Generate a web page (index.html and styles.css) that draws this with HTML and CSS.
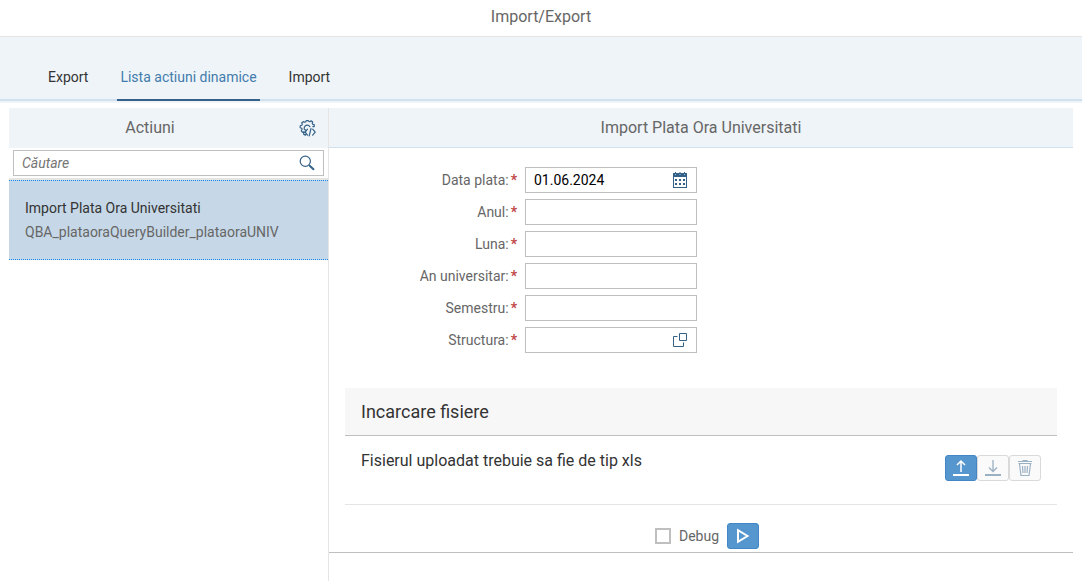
FILE: index.html
```html
<!DOCTYPE html>
<html lang="ro">
<head>
<meta charset="utf-8">
<meta name="viewport" content="width=device-width, initial-scale=1">
<title>Import/Export</title>
<link rel="stylesheet" href="styles.css">
</head>
<body>
<header class="page-header"><h1 class="page-title">Import/Export</h1></header>
<nav class="tabs">
  <a class="tab" href="#export">Export</a>
  <a class="tab tab-active" href="#lista" aria-current="page">Lista actiuni dinamice</a>
  <a class="tab" href="#import">Import</a>
</nav>
<div class="split">
  <aside class="master">
    <div class="bar bar-master">
      <h2 class="bar-title">Actiuni</h2>
      <button class="icon-button" type="button" aria-label="Setari dezvoltator">
        <svg width="17" height="17" viewBox="0 0 17 17" fill="none" stroke="#346187" stroke-width="1.2" stroke-linecap="round" stroke-linejoin="round">
          <path d="M13.8 6.6h1.4V4.7l-1.4-.4-.6-1 .5-1.3-1.5-1.2-1.3.9-1-.3L9.3.7H7.2l-.6 1.2-1.1.3L4.2 1.6 2.7 3l.6 1.3-.5 1-1.6.5v2l1.5.5.4 1.1-.8 1.4 1.200 1.500 1.500-.5.6.5"/>
          <path d="M4.600 12.200l.2 2.200 1.600.7.700-.9"/>
          <path d="M5.200 8.700c-.2-2 1.300-3.500 3.100-3.500 1.200 0 2.100.6 2.600 1.500M5.400 9.300l1.300 1"/>
          <path d="M8.500 9.200L6.200 12.200l2.300 3M13.700 9.200l2.500 3-2.500 3M12 8.500l-1.800 7.400"/>
        </svg>
      </button>
    </div>
    <div class="search-row">
      <div class="field">
        <input class="input search-input" type="text" placeholder="Căutare" aria-label="Căutare">
        <button class="icon-button field-icon" type="button" aria-label="Cauta">
          <svg width="16" height="16" viewBox="0 0 16 16" fill="none" stroke="#346187"><circle cx="6.300" cy="6.300" r="5.100" stroke-width="1.200"/><path d="M10 10l1.500 1.500" stroke-width="1.300"/><path d="M11.200 11.200l3.300 3" stroke-width="2" stroke-linecap="round"/></svg>
        </button>
      </div>
    </div>
    <ul class="list">
      <li><a class="list-item" href="#plata"><span class="item-title">Import Plata Ora Universitati</span><span class="item-text">QBA_plataoraQueryBuilder_plataoraUNIV</span></a></li>
    </ul>
  </aside>
  <main class="detail">
    <div class="bar bar-detail"><h2 class="bar-title">Import Plata Ora Universitati</h2></div>
    <form class="form">
      <div class="form-row">
        <label class="label" for="data">Data plata:<span class="required">*</span></label>
        <div class="field">
          <input class="input" id="data" type="text" value="01.06.2024" required>
          <button class="icon-button field-icon" type="button" aria-label="Alege data">
            <svg width="16" height="16" viewBox="0 0 16 16" fill="#346187"><path fill-rule="evenodd" d="M1 1h14v15H1zM2 5v10h12V5z"/><path d="M3 0h1v1H3zM7.500 0h1v1h-1zM12 0h1v1h-1zM3 7h2v2H3zM7 7h2v2H7zM11 7h2v2h-2zM3 11h2v2H3zM7 11h2v2H7zM11 11h2v2h-2z"/><path fill="#a9bfd2" d="M3 2h1v1H3zM7.500 2h1v1h-1zM12 2h1v1h-1z"/></svg>
          </button>
        </div>
      </div>
      <div class="form-row"><label class="label" for="anul">Anul:<span class="required">*</span></label><div class="field"><input class="input" id="anul" type="text" required></div></div>
      <div class="form-row"><label class="label" for="luna">Luna:<span class="required">*</span></label><div class="field"><input class="input" id="luna" type="text" required></div></div>
      <div class="form-row"><label class="label" for="an-univ">An universitar:<span class="required">*</span></label><div class="field"><input class="input" id="an-univ" type="text" required></div></div>
      <div class="form-row"><label class="label" for="semestru">Semestru:<span class="required">*</span></label><div class="field"><input class="input" id="semestru" type="text" required></div></div>
      <div class="form-row">
        <label class="label" for="structura">Structura:<span class="required">*</span></label>
        <div class="field">
          <input class="input" id="structura" type="text" required>
          <button class="icon-button field-icon" type="button" aria-label="Alege structura">
            <svg width="16" height="16" viewBox="0 0 16 16" fill="none" stroke="#346187" stroke-width="1"><path d="M7.500 1.500h7v7h-7zM5.500 4.500h-4v10h10v-4"/></svg>
          </button>
        </div>
      </div>
    </form>
    <section class="upload">
      <h3 class="upload-title">Incarcare fisiere</h3>
      <div class="upload-body">
        <p class="upload-text">Fisierul uploadat trebuie sa fie de tip xls</p>
        <div class="upload-actions">
          <button class="button button-primary" type="button" aria-label="Incarca">
            <svg width="18" height="18" viewBox="0 0 18 18" fill="none" stroke="currentColor"><path d="M1 16h16" stroke-width="2"/><path d="M9 13V2M5 6l4-4 4 4" stroke-width="1.500"/></svg>
          </button>
          <button class="button" type="button" aria-label="Descarca" disabled>
            <svg width="18" height="18" viewBox="0 0 18 18" fill="none" stroke="currentColor"><path d="M1 16h16" stroke-width="2"/><path d="M9 1v11M5 8.500l4 4 4-4" stroke-width="1.300"/></svg>
          </button>
          <button class="button" type="button" aria-label="Sterge" disabled>
            <svg width="18" height="18" viewBox="0 0 18 18" fill="none" stroke="currentColor" stroke-width="1.200"><path d="M2 2.500h14M6.500 1.500h5M2.500 4.500h13M3.500 5l1.500 11.500h8L14.500 5M6.500 7l.5 7M9 7v7M11.500 7l-.5 7"/></svg>
          </button>
        </div>
      </div>
    </section>
    <div class="footer">
      <label class="check"><input class="checkbox" type="checkbox">Debug</label>
      <button class="button button-primary" type="button" aria-label="Executa">
        <svg width="16" height="16" viewBox="0 0 16 16" fill="none" stroke="currentColor" stroke-width="2"><path d="M3 2.200v11.600L12.500 8z"/></svg>
      </button>
    </div>
  </main>
</div>
</body>
</html>
```
FILE: styles.css
```css
* {
  box-sizing: border-box;
}

body {
  display: flex;
  flex-direction: column;
  min-height: 100vh;
  margin: 0;
  background: #fff;
  color: #333;
  font-family: Roboto, "Liberation Sans", sans-serif;
  font-size: 14px;
  line-height: 20px;
}

h1, h2, h3, p, ul {
  margin: 0;
  padding: 0;
  font-weight: 400;
}

button, input {
  font: inherit;
}

svg {
  display: block;
}

.page-header {
  padding: 7px 0 9px;
  border-bottom: 1px solid #e5e5e5;
  text-align: center;
}

.page-title,
.bar-title {
  color: #666;
  font-size: 16px;
  line-height: 20px;
}

.tabs {
  display: flex;
  gap: 26px;
  padding: 20px 45px 0;
  background: #eff4f8;
  border-bottom: 2px solid #eff4f8;
  box-shadow: inset 0 -2px #d1e0ee;
}

.tab {
  padding: 10px 3px 12px;
  border-bottom: 2px solid transparent;
  color: #333;
  text-decoration: none;
}

.tab-active {
  border-color: #346187;
  color: #427cac;
}

.split {
  display: flex;
  flex: 1;
  padding: 5px 9px 0;
}

.master {
  flex: 0 0 320px;
  border-right: 1px solid #e5e5e5;
}

.bar {
  display: flex;
  align-items: center;
  height: 40px;
  padding: 0 12px;
  background: #eff4f8;
}

.bar-master {
  gap: 12px;
  padding-left: 4px;
}

.bar-title {
  flex: 1;
  text-align: center;
}

.bar-detail {
  border-bottom: 1px solid #d1e0ee;
}

.icon-button {
  display: flex;
  padding: 0;
  border: 0;
  background: none;
  cursor: pointer;
}

.search-row {
  padding: 2px 4px;
  border-bottom: 2px solid #e5e5e5;
}

.field {
  position: relative;
}

.input {
  display: block;
  width: 100%;
  height: 26px;
  padding: 0 8px;
  border: 1px solid #bfbfbf;
  border-radius: 0;
  background: #fff;
  color: #000;
}

.search-input::placeholder {
  color: #757575;
  font-style: italic;
}

.field-icon {
  position: absolute;
  top: 5px;
  right: 9px;
}

.list {
  list-style: none;
}

.list-item {
  display: flex;
  flex-direction: column;
  gap: 4px;
  padding: 17px 16px;
  border: dotted #1a8cf0;
  border-width: 1px 0;
  background: #c6d8e7;
  text-decoration: none;
}

.item-title {
  color: #333;
}

.item-text {
  color: #666;
}

.detail {
  flex: 1;
  min-width: 0;
}

.form {
  display: grid;
  gap: 6px;
  padding: 19px 16px 35px;
}

.form-row {
  display: grid;
  grid-template-columns: 25% 172px;
  align-items: center;
  column-gap: 2px;
}

.label {
  padding-right: 6px;
  color: #666;
  text-align: right;
  white-space: nowrap;
}

.required {
  margin-left: 2px;
  color: #c14646;
  font-weight: 700;
}

.upload {
  margin: 0 16px;
  border-bottom: 1px solid #e5e5e5;
}

.upload-title {
  padding: 12px 16px 11px;
  border-bottom: 1px solid #bfbfbf;
  background: #f7f7f7;
  font-size: 18px;
  line-height: 24px;
}

.upload-body {
  display: flex;
  justify-content: space-between;
  padding: 15px 16px 23px;
}

.upload-text {
  font-size: 16px;
}

.upload-actions {
  display: flex;
  padding-top: 4px;
}

.button {
  display: flex;
  align-items: center;
  justify-content: center;
  width: 32px;
  height: 26px;
  padding: 0;
  border: 1px solid #d9d9d9;
  border-radius: 3px;
  background: #fafafa;
  color: #9ab0c3;
}

.button-primary {
  border-color: #4287c5;
  background: #5496cd;
  color: #fff;
}

.footer {
  display: flex;
  align-items: center;
  justify-content: center;
  gap: 8px;
  padding: 18px 0 3px;
  border-bottom: 1px solid #bfbfbf;
}

.check {
  display: flex;
  align-items: center;
  gap: 8px;
  margin-left: 12px;
  color: #666;
}

.checkbox {
  appearance: none;
  width: 16px;
  height: 16px;
  margin: 0;
  border: 2px solid #bfbfbf;
  background: #fff;
}
```
